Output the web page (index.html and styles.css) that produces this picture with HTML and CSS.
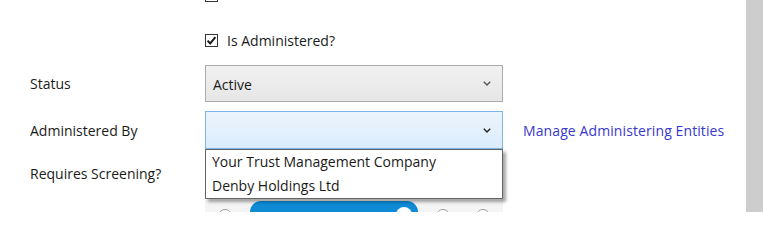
FILE: index.html
```html
<!DOCTYPE html>
<html>
<head>
<meta charset="utf-8">
<link rel="stylesheet" href="styles.css">
</head>
<body>
<div class="page">
  <div class="form">
    <div class="row row-cb-top">
      <div class="label"></div>
      <div class="control"><span class="checkbox"></span></div>
    </div>
    <div class="row row-cb">
      <div class="label"></div>
      <div class="control cb-line">
        <span class="checkbox checked">
          <svg viewBox="0 0 13 13" width="13" height="13"><path d="M2.6 6.6 L5.2 9.4 L10.4 3.2" fill="none" stroke="#1a1a1a" stroke-width="2"/></svg>
        </span>
        <span class="cb-text">Is Administered?</span>
      </div>
    </div>
    <div class="row row-select">
      <div class="label">Status</div>
      <div class="control">
        <div class="select">
          <span class="value">Active</span>
          <svg class="chev" viewBox="0 0 8 5" width="8" height="5"><path d="M0.8 0.8 L4 4 L7.2 0.8" fill="none" stroke="#555" stroke-width="1.4"/></svg>
        </div>
      </div>
    </div>
    <div class="row row-select row-admin">
      <div class="label">Administered By</div>
      <div class="control">
        <div class="select select-open">
          <span class="value"></span>
          <svg class="chev" viewBox="0 0 8 5" width="8" height="5"><path d="M0.8 0.8 L4 4 L7.2 0.8" fill="none" stroke="#222" stroke-width="1.4"/></svg>
        </div>
        <ul class="dropdown">
          <li>Your Trust Management Company</li>
          <li>Denby Holdings Ltd</li>
        </ul>
      </div>
      <a class="link" href="#">Manage Administering Entities</a>
    </div>
    <div class="row row-screen">
      <div class="label">Requires Screening?</div>
      <div class="control">
        <div class="toggle-strip">
          <span class="radio"></span>
          <span class="pill"><span class="knob"></span></span>
          <span class="radio r2"></span>
          <span class="radio r3"></span>
        </div>
      </div>
    </div>
  </div>
  <div class="scrollbar"></div>
</div>
</body>
</html>
```
FILE: styles.css
```css
html, body {
  margin: 0;
  padding: 0;
  background: #fff;
  overflow: hidden;
}
body {
  font-family: "Open Sans", "Noto Sans", sans-serif;
  font-size: 14px;
  color: #1a1a1a;
}
.page {
  display: flex;
  height: 212px;
  overflow: hidden;
}
.form {
  flex: 1;
  padding-left: 30px;
  display: flex;
  flex-direction: column;
}
.scrollbar {
  width: 17px;
  background: #cdcdcd;
}
.row {
  display: flex;
  align-items: center;
}
.label {
  width: 175px;
  flex: none;
}
.control {
  width: 298px;
  flex: none;
  position: relative;
}
.row-cb-top {
  margin-top: -11px;
  height: 13px;
}
.row-cb {
  margin-top: 32px;
  height: 13px;
}
.checkbox {
  display: block;
  width: 11px;
  height: 11px;
  border: 1px solid #333;
  background: #fff;
}
.checkbox svg {
  display: block;
  margin: -1px;
}
.cb-line {
  display: flex;
  align-items: center;
}
.cb-text {
  margin-left: 9px;
  line-height: 13px;
}
.row-select {
  margin-top: 18px;
  height: 37px;
}
.row-admin {
  margin-top: 9px;
  height: 38px;
  position: relative;
  z-index: 2;
}
.select {
  box-sizing: border-box;
  height: 37px;
  border: 1px solid #acacac;
  background: linear-gradient(#f1f1f1, #e6e6e6);
  display: flex;
  align-items: center;
  padding: 0 8px 0 7px;
}
.row-admin .select {
  height: 38px;
}
.select-open {
  border-color: #7eb4ea;
  background: linear-gradient(#ebf4fc, #dcecfc);
}
.value {
  flex: 1;
  padding-top: 1px;
}
.chev {
  display: block;
  margin-right: 3px;
}
.dropdown {
  position: absolute;
  left: 0;
  top: 38px;
  width: 298px;
  box-sizing: border-box;
  margin: 0;
  padding: 1px 0 0;
  list-style: none;
  background: #fff;
  border: 1px solid #646464;
  height: 50px;
  box-shadow: 3px 3px 3px rgba(0,0,0,0.35);
}
.dropdown li {
  height: 24px;
  line-height: 22px;
  padding-left: 6px;
}
.link {
  margin-left: 20px;
  color: #3838cc;
  text-decoration: none;
  letter-spacing: 0.1px;
}
.row-screen {
  margin-top: 9px;
  align-items: flex-start;
  height: 60px;
}
.row-screen .label {
  padding-top: 6px;
}
.toggle-strip {
  margin-top: 42px;
  height: 30px;
  background: #f4f4f4;
  position: relative;
}
.radio {
  position: absolute;
  top: 9px;
  left: 13px;
  width: 12px;
  height: 12px;
  border: 1px solid #9a9a9a;
  border-radius: 50%;
  background: #fff;
}
.radio.r2 { left: 231px; }
.radio.r3 { left: 271px; }
.pill {
  position: absolute;
  left: 45px;
  top: 1px;
  width: 168px;
  height: 24px;
  border-radius: 11px;
  background: #0f8bd6;
}
.knob {
  position: absolute;
  right: 6px;
  top: 6px;
  width: 16px;
  height: 16px;
  border-radius: 50%;
  background: #fff;
}
```
